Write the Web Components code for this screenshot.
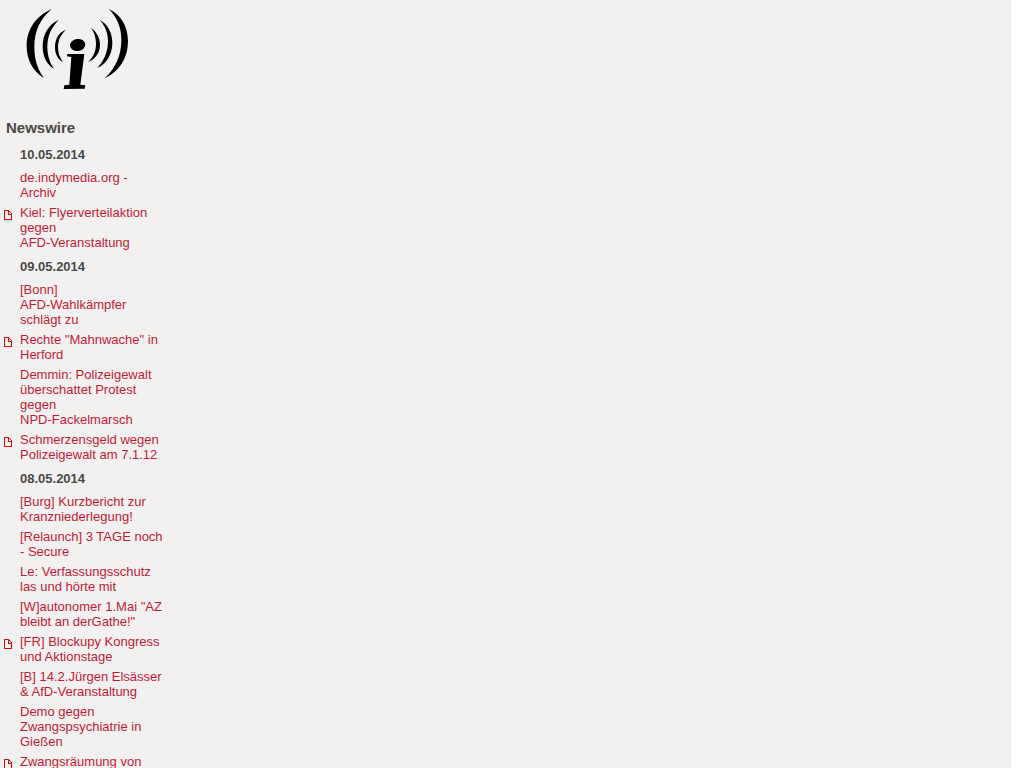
<!DOCTYPE html>
<html lang="de">
<head>
<meta charset="utf-8">
<title>Newswire</title>
<style>
html { background: #fff; }
body { margin: 0; height: 100vh; overflow: hidden; font: 13px/15px "Liberation Sans", Arial, sans-serif; color: #4a4a48; }
news-item span { white-space: nowrap; }
</style>
</head>
<body>
<news-page>
  <site-logo slot="logo"></site-logo>
  <news-wire>
    <news-day date="10.05.2014">
      <news-item>de.indymedia.org - Archiv</news-item>
      <news-item doc>Kiel: Flyerverteilaktion gegen <span>AFD-Veranstaltung</span></news-item>
    </news-day>
    <news-day date="09.05.2014">
      <news-item>[Bonn] <span>AFD-Wahlkämpfer</span> schlägt zu</news-item>
      <news-item doc>Rechte "Mahnwache" in Herford</news-item>
      <news-item>Demmin: Polizeigewalt überschattet Protest gegen <span>NPD-Fackelmarsch</span></news-item>
      <news-item doc>Schmerzensgeld wegen Polizeigewalt am 7.1.12</news-item>
    </news-day>
    <news-day date="08.05.2014">
      <news-item>[Burg] Kurzbericht zur Kranzniederlegung!</news-item>
      <news-item>[Relaunch] 3 TAGE noch - Secure</news-item>
      <news-item>Le: Verfassungsschutz las und hörte mit</news-item>
      <news-item>[W]autonomer 1.Mai "AZ bleibt an derGathe!"</news-item>
      <news-item doc>[FR] Blockupy Kongress und Aktionstage</news-item>
      <news-item>[B] 14.2.Jürgen Elsässer &amp; AfD-Veranstaltung</news-item>
      <news-item>Demo gegen Zwangspsychiatrie in Gießen</news-item>
      <news-item doc>Zwangsräumung von</news-item>
    </news-day>
  </news-wire>
</news-page>
<script>
function define(name, html, setup) {
  const template = document.createElement('template');
  template.innerHTML = html;
  customElements.define(name, class extends HTMLElement {
    constructor() {
      super();
      this.attachShadow({ mode: 'open' }).append(template.content.cloneNode(true));
    }
    connectedCallback() { if (setup) setup(this, this.shadowRoot); }
  });
}

define('news-page', `
<style>
:host { display: block; min-height: 100vh; margin-right: 13px; background: #f2f1ef; border-right: 1px solid #e9e9e7; box-sizing: border-box; }
main { width: 166px; }
</style>
<header><slot name="logo"></slot></header><main><slot></slot></main>`);

define('site-logo', `
<style>
:host { display: block; height: 100px; }
a, svg { display: block; }
a { width: 170px; color: #000; }
</style>
<a href="#" aria-label="Indymedia">
<svg width="170" height="100" viewBox="0 0 510 300" fill="currentColor" aria-hidden="true">
<path d="M155 27C108 48 80 88 80 138C80 181 100 215 132 234C112 208 103 177 103 141C103 92 122 55 155 27Z"/>
<path d="M177 60C146 72 128 103 128 139C128 171 141 194 162 207C149 188 142 167 142 139C142 107 155 80 177 60Z"/>
<path d="M198 89C176 97 165 117 165 141C165 162 173 178 189 186C179 173 174 159 174 142C174 120 183 103 198 89Z"/>
<path d="M273 84C289 95 300 112 300 135C300 158 286 177 265 186C280 171 288 153 288 132C288 113 283 97 273 84Z"/>
<path d="M299 59C323 73 337 97 337 128C337 162 320 191 292 204C313 181 324 154 324 123C324 98 315 77 299 59Z"/>
<path d="M326 27C362 43 384 78 384 124C384 174 358 215 314 235C347 204 364 166 364 119C364 82 351 51 326 27Z"/>
<ellipse cx="233" cy="135" rx="23" ry="18" transform="rotate(-8 233 135)"/>
<path d="M202 162H253L241 254L256 256L254 266L191 267L193 256L208 254L214 171L201 169Z"/>
</svg></a>`);

define('news-wire', `
<style>
:host { display: block; padding-top: 19px; }
h2 { margin: 0 6px 10px; font-size: 15px; line-height: 18px; }
section { display: flex; flex-direction: column; gap: 9px; }
</style>
<h2>Newswire</h2><section><slot></slot></section>`);

define('news-day', `
<style>
:host { display: block; }
h3 { margin: 0 0 8px 20px; font-size: 13px; line-height: 15px; }
div { display: flex; flex-direction: column; gap: 5px; }
</style>
<h3></h3><div><slot></slot></div>`,
(host, root) => { root.querySelector('h3').textContent = host.getAttribute('date'); });

define('news-item', `
<style>
:host { display: flex; }
.mark { flex: none; width: 16px; padding: 5px 0 0 4px; box-sizing: border-box; margin-right: 4px; }
svg { display: none; }
:host([doc]) svg { display: block; }
a { flex: 1; min-width: 0; color: #c01c38; text-decoration: none; }
</style>
<span class="mark"><svg width="8" height="10" viewBox="0 0 8 10" fill="#d90a0a" shape-rendering="crispEdges" aria-hidden="true"><path d="M0 0H5V1H6V2H7V3H8V10H0ZM1 1V9H7V5H4V1ZM5 2V4H7V3H6V2Z" fill-rule="evenodd"/></svg></span><a href="#"><slot></slot></a>`);
</script>
</body>
</html>
